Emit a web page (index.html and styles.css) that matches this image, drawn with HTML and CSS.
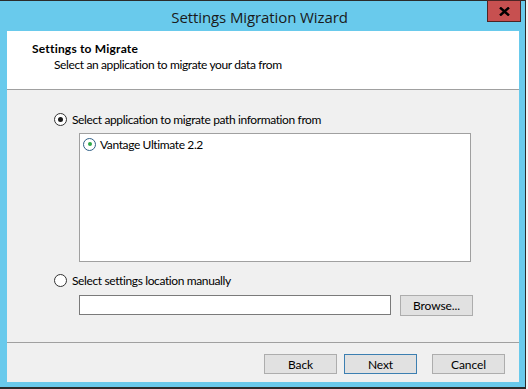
FILE: index.html
```html
<!DOCTYPE html>
<html>
<head>
<meta charset="utf-8">
<link rel="stylesheet" href="styles.css">
</head>
<body>
<div class="window">
  <div class="titlebar">
    <span class="title">Settings Migration Wizard</span>
    <div class="close"><svg width="11" height="9" viewBox="0 0 11 9"><path d="M1 0.5 L10 8.5 M10 0.5 L1 8.5" stroke="#000" stroke-width="2.4"/></svg></div>
  </div>
  <div class="client">
    <div class="header">
      <div class="h-title">Settings to Migrate</div>
      <div class="h-sub">Select an application to migrate your data from</div>
    </div>
    <div class="main">
      <div class="radio-row">
        <span class="radio checked"></span>
        <span class="label">Select application to migrate path information from</span>
      </div>
      <div class="listbox">
        <div class="list-item">
          <span class="radio small-green"></span>
          <span class="label">Vantage Ultimate 2.2</span>
        </div>
      </div>
      <div class="radio-row second">
        <span class="radio"></span>
        <span class="label">Select settings location manually</span>
      </div>
      <div class="path-row">
        <div class="textbox"></div>
        <div class="btn browse">Browse...</div>
      </div>
    </div>
    <div class="footer">
      <div class="btn">Back</div>
      <div class="btn default">Next</div>
      <div class="btn cancel">Cancel</div>
    </div>
  </div>
</div>
</body>
</html>
```

FILE: styles.css
```css
html, body {
  margin: 0;
  padding: 0;
  background: #f4f4f4;
}
body {
  width: 528px;
  height: 389px;
  overflow: hidden;
  font-family: "Lato", "Open Sans", sans-serif;
  font-size: 12px;
  letter-spacing: -0.38px;
  color: #000;
}
.window {
  width: 525px;
  height: 386px;
  background: #69caec;
  border-top: 1px solid #2b2b2b;
  border-right: 1px solid #2b2b2b;
  border-bottom: 2px solid #2b2b2b;
  display: flex;
  flex-direction: column;
  position: relative;
}
.titlebar {
  height: 30px;
  display: flex;
  align-items: center;
  justify-content: center;
  padding-right: 6px;
}
.title {
  font-family: "Open Sans", sans-serif;
  font-size: 15px;
  color: #1a1a1a;
  letter-spacing: -0.1px;
  margin-top: 1px;
}
.close {
  position: absolute;
  top: -1px;
  right: 4px;
  width: 32px;
  height: 20px;
  background: #c75050;
  border: 1px solid #4c2525;
  display: flex;
  align-items: center;
  justify-content: center;
}
.client {
  margin: 0 6px 0 7px;
  height: 351px;
  background: #f0f0f0;
  display: flex;
  flex-direction: column;
}
.header {
  background: #fff;
  height: 59px;
  border-bottom: 1px solid #a0a0a0;
  padding-left: 25px;
  box-sizing: border-box;
  padding-top: 10px;
}
.h-title {
  font-weight: bold;
  letter-spacing: 0.2px;
  height: 16px;
  line-height: 16px;
}
.h-sub {
  padding-left: 22px;
  line-height: 15px;
}
.main {
  height: 253px;
  box-sizing: border-box;
  padding: 22px 48px 0 47px;
  border-bottom: 1px solid #a0a0a0;
}
.radio-row {
  display: flex;
  align-items: center;
  height: 15px;
  gap: 5px;
}
.radio-row.second {
  margin-top: 11px;
}
.radio {
  width: 11px;
  height: 11px;
  border: 1px solid #333;
  border-radius: 50%;
  background: #fff;
  position: relative;
  flex: none;
}
.radio.checked::after {
  content: "";
  position: absolute;
  left: 3px;
  top: 3px;
  width: 5px;
  height: 5px;
  border-radius: 50%;
  background: #1a1a1a;
}
.radio.small-green {
  border-color: #2f5f86;
}
.radio.small-green::after {
  content: "";
  position: absolute;
  left: 3.5px;
  top: 3.5px;
  width: 4px;
  height: 4px;
  border-radius: 50%;
  background: #2fa84a;
}
.label {
  line-height: 15px;
}
.listbox {
  margin: 6px 0 0 25px;
  height: 129px;
  box-sizing: border-box;
  border: 1px solid #a0a0a0;
  background: #fff;
  padding: 2px 3px;
}
.list-item {
  display: flex;
  align-items: center;
  gap: 4px;
  height: 16px;
}
.path-row {
  margin: 7px 0 0 25px;
  display: flex;
  align-items: flex-start;
  gap: 9px;
  margin-right: -2px;
}
.textbox {
  flex: 1;
  height: 20px;
  box-sizing: border-box;
  border: 1px solid #7a7a7a;
  background: #fff;
}
.btn {
  width: 73px;
  height: 20px;
  box-sizing: border-box;
  border: 1px solid #adadad;
  background: #e1e1e1;
  display: flex;
  align-items: center;
  justify-content: center;
  letter-spacing: -0.1px;
}
.browse {
  height: 21px;
}
.btn.default {
  border-color: #3c7fb1;
}
.footer {
  display: flex;
  justify-content: flex-end;
  padding: 11px 14px 0 0;
  gap: 7px;
}
.btn.cancel {
  margin-left: 8px;
}
```
